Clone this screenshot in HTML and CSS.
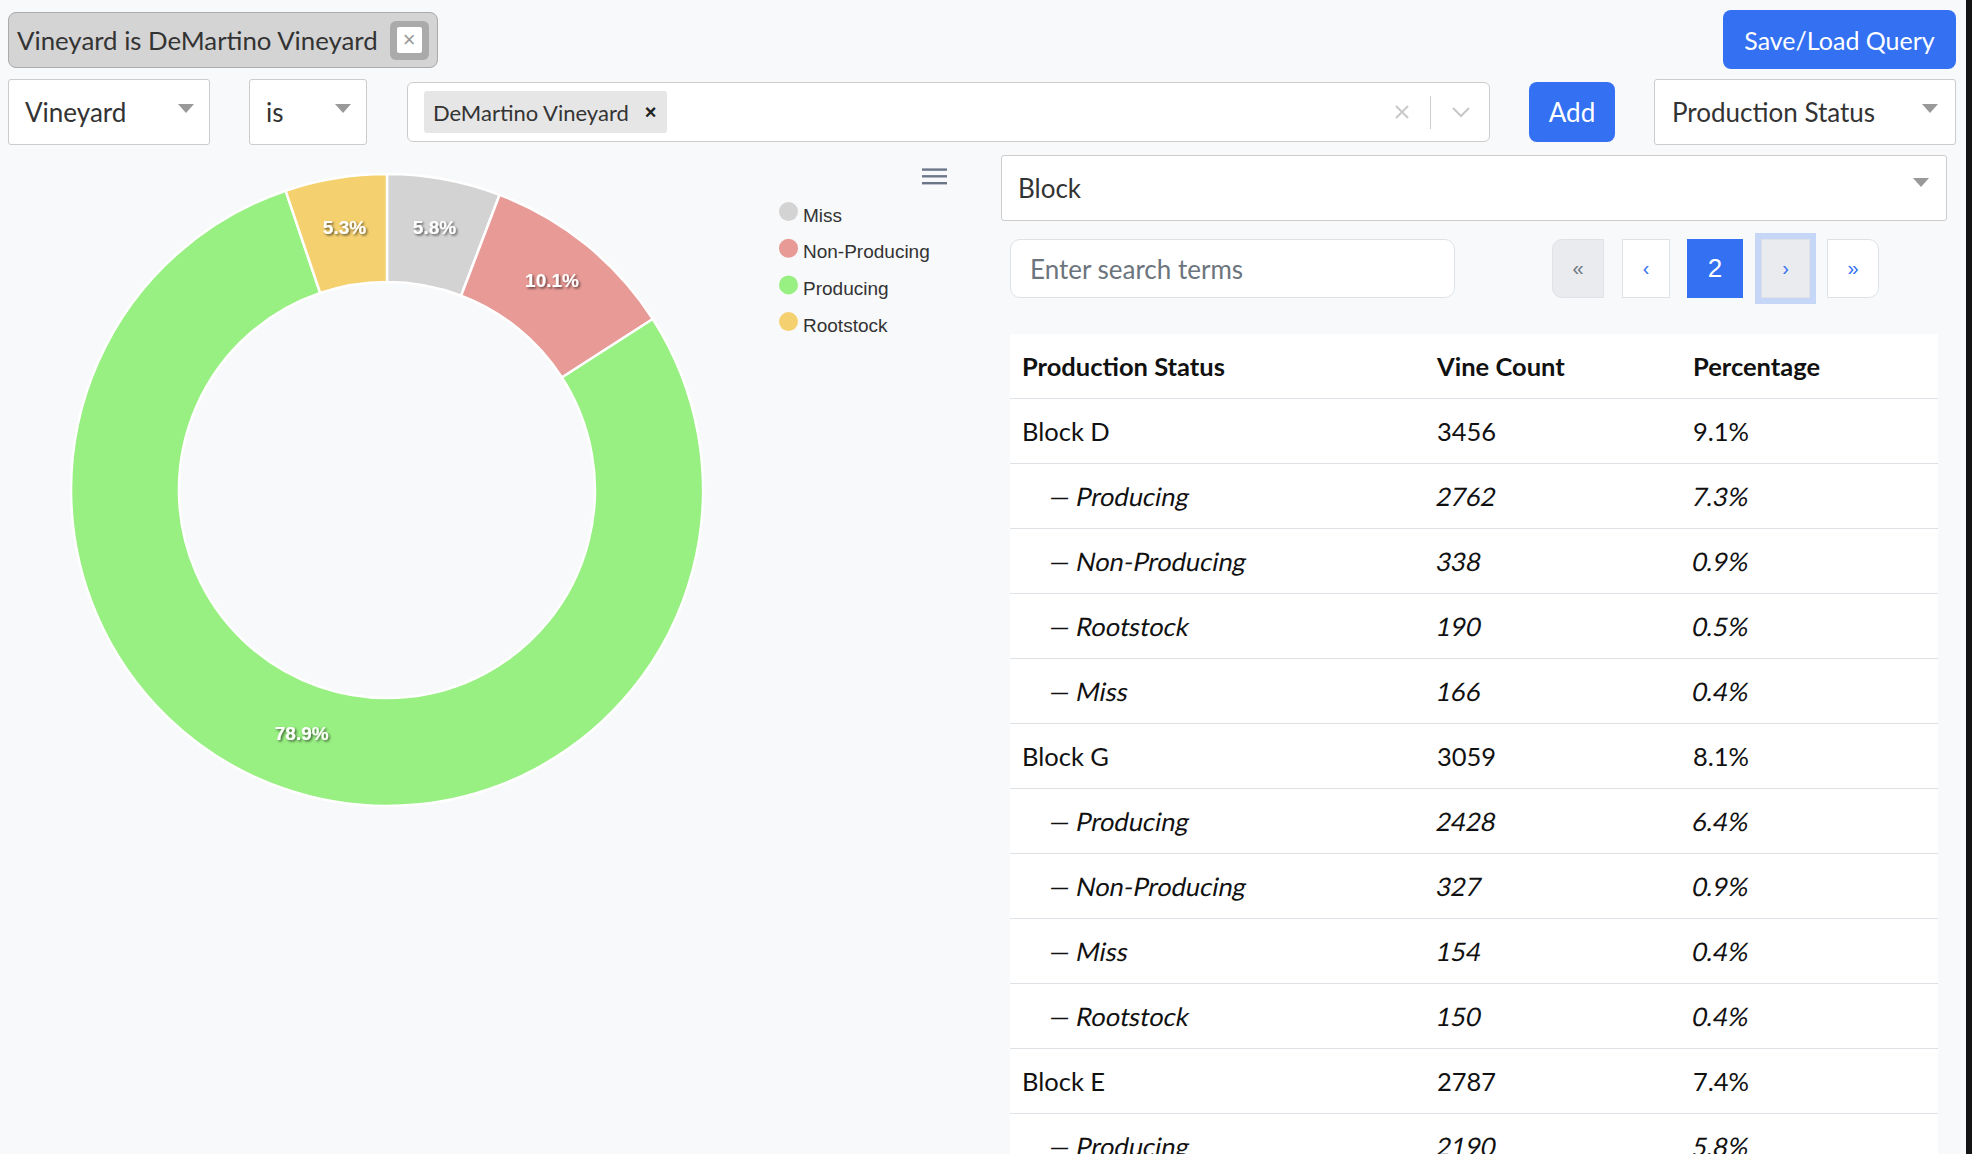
FILE: index.html
```html
<!DOCTYPE html>
<html lang="en">
<head>
<meta charset="utf-8">
<title>Vineyard Query</title>
<link rel="stylesheet" href="styles.css">
</head>
<body>
<div class="screen">
  <div class="page">
    <div class="top-row">
      <div class="chip">
        <span class="chip-text">Vineyard is DeMartino Vineyard</span>
        <span class="chip-close"><span class="chip-close-inner">×</span></span>
      </div>
      <button class="btn btn-save">Save/Load Query</button>
    </div>

    <div class="filter-row">
      <div class="select sel-field"><span>Vineyard</span><i class="caret"></i></div>
      <div class="select sel-op"><span>is</span><i class="caret"></i></div>
      <div class="multi">
        <span class="tag"><span class="tag-text">DeMartino Vineyard</span><span class="tag-x">×</span></span>
        <span class="multi-spacer"></span>
        <svg class="multi-clear" width="18" height="14" viewBox="0 0 18 14"><path d="M3 1 L15 13 M15 1 L3 13"/></svg>
        <span class="multi-sep"></span>
        <svg class="multi-chev" width="20" height="12" viewBox="0 0 20 12"><path d="M2 2 L10 10 L18 2"/></svg>
      </div>
      <button class="btn btn-add">Add</button>
      <div class="select sel-group"><span>Production Status</span><i class="caret"></i></div>
    </div>

    <div class="main">
      <div class="chart">
        <svg class="chart-svg" width="1001" height="720" viewBox="0 0 1001 720">
          <defs>
            <filter id="lblshadow" x="-30%" y="-40%" width="160%" height="200%">
              <feDropShadow dx="1.5" dy="1.5" stdDeviation="1.3" flood-color="#000" flood-opacity="0.6"/>
            </filter>
          </defs>
          <g class="slices">
            <path class="s-miss" d="M387,19 A316,316 0 0 1 499.6,39.8 L461.1,140.7 A208,208 0 0 0 387,127 Z"/>
            <path class="s-non" d="M499.6,39.8 A316,316 0 0 1 652.8,164 L561.9,222.5 A208,208 0 0 0 461.1,140.7 Z"/>
            <path class="s-prod" d="M652.8,164 A316,316 0 1 1 285.6,35.7 L320.2,138 A208,208 0 1 0 561.9,222.5 Z"/>
            <path class="s-root" d="M285.6,35.7 A316,316 0 0 1 387,19 L387,127 A208,208 0 0 0 320.2,138 Z"/>
          </g>
          <g class="labels">
            <text x="434.5" y="79">5.8%</text>
            <text x="552" y="132">10.1%</text>
            <text x="301.7" y="585">78.9%</text>
            <text x="344.5" y="79">5.3%</text>
          </g>
          <g class="menu">
            <line x1="922" y1="14.6" x2="947" y2="14.6"/>
            <line x1="922" y1="21.3" x2="947" y2="21.3"/>
            <line x1="922" y1="28.2" x2="947" y2="28.2"/>
          </g>
          <g class="legend">
            <circle class="s-miss" cx="788.5" cy="56.5" r="9.5"/>
            <text x="803" y="66.5">Miss</text>
            <circle class="s-non" cx="788.5" cy="93.2" r="9.5"/>
            <text x="803" y="103.2">Non-Producing</text>
            <circle class="s-prod" cx="788.5" cy="129.9" r="9.5"/>
            <text x="803" y="139.9">Producing</text>
            <circle class="s-root" cx="788.5" cy="166.6" r="9.5"/>
            <text x="803" y="176.6">Rootstock</text>
          </g>
        </svg>
      </div>

      <div class="panel">
        <div class="select sel-block"><span>Block</span><i class="caret"></i></div>
        <div class="search-row">
          <div class="search">Enter search terms</div>
          <div class="pager">
            <span class="pg pg-first">«</span>
            <span class="pg pg-prev">‹</span>
            <span class="pg pg-active">2</span>
            <span class="pg pg-next">›</span>
            <span class="pg pg-last">»</span>
          </div>
        </div>
        <table class="grid">
          <colgroup><col class="c1"><col class="c2"><col class="c3"></colgroup>
          <thead>
            <tr><th>Production Status</th><th>Vine Count</th><th>Percentage</th></tr>
          </thead>
          <tbody>
            <tr><td>Block D</td><td>3456</td><td>9.1%</td></tr>
            <tr class="sub"><td><span class="it ind">— Producing</span></td><td><span class="it">2762</span></td><td><span class="it">7.3%</span></td></tr>
            <tr class="sub"><td><span class="it ind">— Non-Producing</span></td><td><span class="it">338</span></td><td><span class="it">0.9%</span></td></tr>
            <tr class="sub"><td><span class="it ind">— Rootstock</span></td><td><span class="it">190</span></td><td><span class="it">0.5%</span></td></tr>
            <tr class="sub"><td><span class="it ind">— Miss</span></td><td><span class="it">166</span></td><td><span class="it">0.4%</span></td></tr>
            <tr><td>Block G</td><td>3059</td><td>8.1%</td></tr>
            <tr class="sub"><td><span class="it ind">— Producing</span></td><td><span class="it">2428</span></td><td><span class="it">6.4%</span></td></tr>
            <tr class="sub"><td><span class="it ind">— Non-Producing</span></td><td><span class="it">327</span></td><td><span class="it">0.9%</span></td></tr>
            <tr class="sub"><td><span class="it ind">— Miss</span></td><td><span class="it">154</span></td><td><span class="it">0.4%</span></td></tr>
            <tr class="sub"><td><span class="it ind">— Rootstock</span></td><td><span class="it">150</span></td><td><span class="it">0.4%</span></td></tr>
            <tr><td>Block E</td><td>2787</td><td>7.4%</td></tr>
            <tr class="sub"><td><span class="it ind">— Producing</span></td><td><span class="it">2190</span></td><td><span class="it">5.8%</span></td></tr>
            <tr class="sub"><td><span class="it ind">— Non-Producing</span></td><td><span class="it">301</span></td><td><span class="it">0.8%</span></td></tr>
          </tbody>
        </table>
      </div>
    </div>
  </div>
  <div class="edge"></div>
</div>
</body>
</html>
```

FILE: styles.css
```css
* { box-sizing: border-box; }

html, body {
  margin: 0;
  padding: 0;
  height: 100%;
  overflow: hidden;
}

body {
  background: #f8f9fa;
  font-family: Lato, "Noto Sans", sans-serif;
  color: #333;
}

.screen {
  display: flex;
  height: 1154px;
  overflow: hidden;
}

.page {
  width: 1966px;
  flex: none;
}

.edge {
  flex: 1;
  background: #141414;
}

/* top row */
.top-row {
  display: flex;
  justify-content: space-between;
  align-items: flex-start;
  padding: 10px 10px 0 8px;
  height: 69px;
}

.chip {
  margin-top: 2px;
  height: 56px;
  display: flex;
  align-items: center;
  background: #d4d4d4;
  border: 1px solid #aaa;
  border-radius: 8px;
  padding: 0 8px 0 8px;
}

.chip-text {
  font-size: 25.8px;
  color: #333;
  margin-right: 12px;
}

.chip-close {
  width: 39px;
  height: 39px;
  background: #aaa;
  border-radius: 6px;
  display: flex;
  align-items: center;
  justify-content: center;
}

.chip-close-inner {
  width: 25px;
  height: 26px;
  background: #fff;
  border-radius: 2px;
  color: #999;
  font-family: "Liberation Sans", sans-serif;
  font-size: 22px;
  line-height: 25px;
  text-align: center;
}

.btn {
  border: none;
  background: #3370f2;
  color: #fff;
  font-family: Lato, "Noto Sans", sans-serif;
  font-size: 25px;
  border-radius: 8px;
  padding: 0;
}

.btn-save {
  width: 233px;
  height: 59px;
}

/* filter row */
.filter-row {
  display: flex;
  align-items: flex-start;
  margin-top: 10px;
  padding-left: 8px;
  gap: 39px;
  height: 66px;
}

.select {
  height: 66px;
  background: #fff;
  border: 1px solid #ccc;
  border-radius: 3px;
  display: flex;
  align-items: center;
  justify-content: space-between;
  padding: 0 15px 0 16px;
  font-size: 26px;
  color: #333;
}

.caret {
  align-self: flex-start;
  margin-top: 24px;
  width: 0;
  height: 0;
  border-left: 8px solid transparent;
  border-right: 8px solid transparent;
  border-top: 9px solid #999;
}

.sel-field { width: 202px; }
.sel-op { width: 118px; }
.sel-group { width: 302px; padding-left: 17px; padding-right: 17px; }

.multi {
  width: 1083px;
  height: 60px;
  margin-top: 3px;
  margin-left: 1px;
  background: #fff;
  border: 1px solid #ccc;
  border-radius: 6px;
  display: flex;
  align-items: center;
  padding: 0 18px 0 16px;
}

.tag {
  height: 42px;
  background: #e6e6e6;
  border-radius: 3px;
  display: flex;
  align-items: center;
  padding: 0 11px 0 9px;
  font-size: 22px;
  color: #333;
}

.tag-x {
  margin-left: 16px;
  font-family: "Liberation Sans", sans-serif;
  font-weight: bold;
  font-size: 20px;
  color: #222;
}

.multi-spacer { flex: 1; }

.multi-clear path,
.multi-chev path {
  fill: none;
  stroke: #c8c8c8;
  stroke-width: 2;
}

.multi-sep {
  width: 1px;
  height: 33px;
  background: #ccc;
  margin: 0 20px 0 19px;
}

.btn-add {
  width: 86px;
  height: 60px;
  margin-top: 3px;
  font-size: 26px;
}

/* main */
.main {
  display: flex;
  align-items: flex-start;
  margin-top: 10px;
}

.chart {
  width: 1001px;
  flex: none;
}

.chart-svg { display: block; }

.slices path {
  stroke: #fff;
  stroke-width: 2.5;
  stroke-linejoin: round;
}

.s-miss { fill: #d3d3d3; }
.s-non { fill: #e89a96; }
.s-prod { fill: #98ef82; }
.s-root { fill: #f4d06f; }

.labels text {
  font-family: "Liberation Sans", Arial, sans-serif;
  font-weight: bold;
  font-size: 19px;
  fill: #fff;
  text-anchor: middle;
  filter: url(#lblshadow);
}

.menu line {
  stroke: #6b7789;
  stroke-width: 2.4;
}

.legend text {
  font-family: "Liberation Sans", Arial, sans-serif;
  font-size: 19px;
  fill: #333;
}

.panel {
  width: 946px;
  flex: none;
}

.sel-block {
  width: 946px;
  height: 66px;
  padding-left: 16px;
  padding-right: 17px;
}

.sel-block .caret { margin-top: 22px; }

.search-row {
  display: flex;
  align-items: center;
  margin: 18px 0 0 9px;
  height: 59px;
}

.search {
  width: 445px;
  height: 59px;
  background: #fff;
  border: 1px solid #dee2e6;
  border-radius: 10px;
  padding-left: 19px;
  display: flex;
  align-items: center;
  font-size: 26px;
  color: #6c757d;
}

.pager {
  display: flex;
  align-items: center;
  margin-left: 97px;
  gap: 17px;
}

.pg {
  height: 59px;
  display: flex;
  align-items: center;
  justify-content: center;
  background: #fff;
  border: 1px solid #dee2e6;
  font-family: "Liberation Sans", Arial, sans-serif;
  font-size: 20px;
  color: #3370f2;
}

.pg-first {
  width: 52px;
  background: #e9ebef;
  color: #6c757d;
  border-radius: 10px 0 0 10px;
  margin-right: 1px;
}

.pg-prev { width: 48px; }

.pg-active {
  width: 56px;
  background: #3370f2;
  border-color: #3370f2;
  color: #fff;
  font-size: 26px;
}

.pg-next {
  width: 49px;
  background: #e9ebef;
  box-shadow: 0 0 0 6px #c6d6f6;
  margin-left: 1px;
}

.pg-last {
  width: 52px;
  border-radius: 0 10px 10px 0;
}

/* table */
.grid {
  margin: 36px 0 0 9px;
  width: 928px;
  border-collapse: collapse;
  table-layout: fixed;
  background: #fff;
  font-size: 25.5px;
  color: #111;
}

.c1 { width: 415px; }
.c2 { width: 256px; }
.c3 { width: 257px; }

.grid th,
.grid td {
  text-align: left;
  padding: 0 0 0 12px;
  border-bottom: 1px solid #dee2e6;
  white-space: nowrap;
}

.grid th {
  height: 64px;
  font-weight: bold;
}

.grid td { height: 65px; }

.it {
  display: inline-block;
  transform: skewX(-11deg);
}

.ind { margin-left: 28px; }
```
